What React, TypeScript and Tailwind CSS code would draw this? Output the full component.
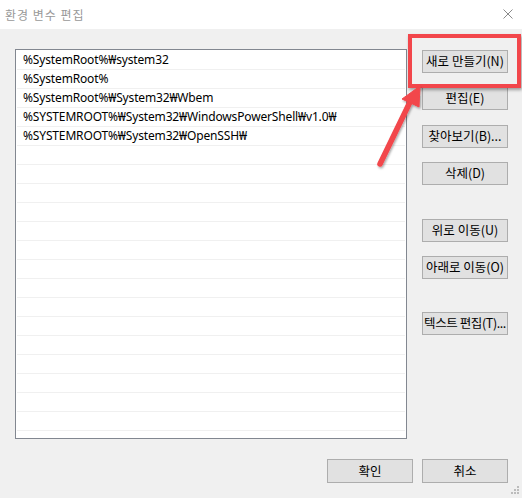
import React from 'react'

const paths = [
  '%SystemRoot%₩system32',
  '%SystemRoot%',
  '%SystemRoot%₩System32₩Wbem',
  '%SYSTEMROOT%₩System32₩WindowsPowerShell₩v1.0₩',
  '%SYSTEMROOT%₩System32₩OpenSSH₩',
]

const font = { fontFamily: '"Noto Sans", "Noto Sans CJK KR", sans-serif' }

function WinButton({ label, className = '' }: { label: string; className?: string }) {
  return (
    <div
      className={`flex items-center justify-center w-[86px] h-[23px] bg-[#e1e1e1] border border-[#adadad] text-[12.5px] text-black whitespace-nowrap ${className}`}
    >
      {label}
    </div>
  )
}

export default function App() {
  const rows = Array.from({ length: 20 }, (_, i) => paths[i] ?? '')

  return (
    <div
      className="relative w-[522px] h-[498px] bg-[#f0f0f0] overflow-hidden flex flex-col"
      style={font}
    >
      {/* title bar */}
      <div className="flex items-center justify-between h-[29px] bg-white pl-[5px] pr-[9px]">
        <span className="text-[12px] text-[#999999] tracking-[1px]" style={{ fontFamily: '"Noto Sans CJK KR", sans-serif' }}>
          환경 변수 편집
        </span>
        <svg width="10" height="10" viewBox="0 0 10 10" className="mt-[-1px]">
          <path d="M0.5 0.5 L9.5 9.5 M9.5 0.5 L0.5 9.5" stroke="#8a8a8a" strokeWidth="1" fill="none" />
        </svg>
      </div>

      {/* body */}
      <div className="flex pl-[15px] mt-[20px]">
        <div className="w-[392px] h-[390px] bg-white border border-[#828790] pt-px overflow-hidden">
          {rows.map((p, i) => (
            <div
              key={i}
              className="mx-px h-[19px] border-b border-[#f0f0f0] pl-[6px] text-[12px] leading-[18px] tracking-[-0.15px] text-black whitespace-nowrap"
            >
              {p}
            </div>
          ))}
        </div>

        <div className="flex flex-col ml-[15px] mt-px" style={{ fontFamily: '"Noto Sans CJK KR", sans-serif' }}>
          <WinButton label="새로 만들기(N)" />
          <WinButton label="편집(E)" className="mt-[14px]" />
          <WinButton label="찾아보기(B)..." className="mt-[15px]" />
          <WinButton label="삭제(D)" className="mt-[14px]" />
          <WinButton label="위로 이동(U)" className="mt-[34px]" />
          <WinButton label="아래로 이동(O)" className="mt-[14px]" />
          <WinButton label="텍스트 편집(T)..." className="mt-[33px] tracking-[-0.4px]" />
        </div>
      </div>

      {/* bottom buttons */}
      <div className="flex justify-end gap-[9px] pr-[14px] mt-[20px]" style={{ fontFamily: '"Noto Sans CJK KR", sans-serif' }}>
        <WinButton label="확인" className="h-[24px]" />
        <WinButton label="취소" className="h-[24px]" />
      </div>

      {/* resize grip */}
      <svg width="10" height="10" viewBox="0 0 10 10" className="absolute right-[2px] bottom-[2px]">
        <rect x="7" y="0" width="2" height="2" fill="#bcbcbc" />
        <rect x="4" y="3" width="2" height="2" fill="#bcbcbc" />
        <rect x="7" y="3" width="2" height="2" fill="#bcbcbc" />
        <rect x="1" y="6" width="2" height="2" fill="#bcbcbc" />
        <rect x="4" y="6" width="2" height="2" fill="#bcbcbc" />
        <rect x="7" y="6" width="2" height="2" fill="#bcbcbc" />
      </svg>

      {/* annotation: highlight box */}
      <div className="absolute left-[408px] top-[34px] w-[113px] h-[54px] border-[4px] border-[#f2464b] shadow-[1px_2px_3px_rgba(0,0,0,0.35)]" />

      {/* annotation: arrow */}
      <svg width="522" height="498" className="absolute left-0 top-0 pointer-events-none">
        <defs>
          <filter id="sh" x="-20%" y="-20%" width="140%" height="140%">
            <feDropShadow dx="1" dy="1.5" stdDeviation="1.2" floodColor="#000" floodOpacity="0.35" />
          </filter>
        </defs>
        <g filter="url(#sh)" fill="#f2464b" stroke="#f2464b">
          <line x1="380" y1="164" x2="410" y2="102" strokeWidth="5.5" strokeLinecap="round" />
          <polygon points="420,86 419,107 402,99" strokeWidth="1" strokeLinejoin="round" />
        </g>
      </svg>
    </div>
  )
}
